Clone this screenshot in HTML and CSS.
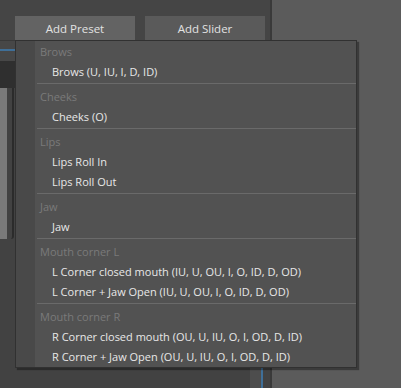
FILE: index.html
```html
<!DOCTYPE html>
<html lang="en">
<head>
    <meta charset="UTF-8">
    <title>Preset Menu</title>
    <link rel="stylesheet" href="styles.css">
</head>
<body>
    <div class="window">
        <div class="left-pane">
            <!-- Toolbar -->
            <div class="toolbar">
                <button class="tool-button preset">Add Preset</button>
                <button class="tool-button">Add Slider</button>
            </div>
            <div class="tab-strip">
                <div class="tab-line"></div>
            </div>
            <div class="dark-band"></div>
            <div class="content">
                <div class="list-box">
                    <div class="list-fill"></div>
                </div>
                <div class="slider-track">
                    <div class="slider-line"></div>
                </div>
            </div>
        </div>
        <div class="right-pane"></div>

        <!-- Add Preset popup -->
        <div class="popup-menu">
            <div class="menu-header">Brows</div>
            <div class="menu-item">Brows (U, IU, I, D, ID)</div>
            <div class="menu-separator"></div>

            <div class="menu-header">Cheeks</div>
            <div class="menu-item">Cheeks (O)</div>
            <div class="menu-separator"></div>

            <div class="menu-header">Lips</div>
            <div class="menu-item">Lips Roll In</div>
            <div class="menu-item">Lips Roll Out</div>
            <div class="menu-separator"></div>

            <div class="menu-header">Jaw</div>
            <div class="menu-item">Jaw</div>
            <div class="menu-separator"></div>

            <div class="menu-header">Mouth corner L</div>
            <div class="menu-item">L Corner closed mouth (IU, U, OU, I, O, ID, D, OD)</div>
            <div class="menu-item">L Corner + Jaw Open (IU, U, OU, I, O, ID, D, OD)</div>
            <div class="menu-separator"></div>

            <div class="menu-header">Mouth corner R</div>
            <div class="menu-item">R Corner closed mouth (OU, U, IU, O, I, OD, D, ID)</div>
            <div class="menu-item">R Corner + Jaw Open (OU, U, IU, O, I, OD, D, ID)</div>
        </div>
    </div>
</body>
</html>
```

FILE: styles.css
```css
body {
    margin: 0;
    padding: 0;
    font-family: 'Open Sans', sans-serif;
    font-size: 11px;
    background-color: #444;
}
.window {
    position: relative;
    display: flex;
    width: 401px;
    height: 388px;
    overflow: hidden;
}
.left-pane {
    width: 270px;
    display: flex;
    flex-direction: column;
    background-color: #424242;
}
.toolbar {
    display: flex;
    gap: 10px;
    height: 40px;
    padding: 16px 0 0 15px;
    box-sizing: border-box;
    background-color: #454545;
}
.tool-button {
    width: 120px;
    height: 24px;
    border: none;
    padding: 0;
    background-color: #5a5a5a;
    color: #e2e2e2;
    font-family: inherit;
    font-size: 11.5px;
}
.tool-button.preset {
    background-color: #636363;
}
.tab-strip {
    height: 21px;
    border-top: 1px solid #393939;
    box-sizing: border-box;
    background-color: #474747;
    padding-top: 8px;
}
.tab-line {
    height: 2px;
    background-color: #3f6f98;
}
.dark-band {
    height: 27px;
    background-color: #2f2f2f;
}
.content {
    flex: 1;
    display: flex;
}
.list-box {
    width: 12px;
    height: 151px;
    border-right: 2px solid #2b2b2b;
    border-bottom-right-radius: 3px;
    box-sizing: content-box;
}
.list-fill {
    width: 7px;
    height: 100%;
    background-color: #7a7a7a;
}
.slider-track {
    margin-left: auto;
    width: 11px;
    background-color: #4d4d4d;
    border-right: 2px solid #3f6f98;
    margin-right: 7px;
}
.right-pane {
    flex: 1;
    background-color: #5b5b5b;
    border-left: 2px solid #3a3a3a;
}
.popup-menu {
    position: absolute;
    left: 15px;
    top: 40px;
    width: 342px;
    box-sizing: border-box;
    padding: 1px 0 0;
    border: 1px solid #313131;
    background: linear-gradient(to right, #494949 19px, #525252 19px);
    box-shadow: 2px 2px 1px rgba(0, 0, 0, 0.35);
}
.menu-header {
    height: 20px;
    line-height: 20px;
    padding-left: 24px;
    color: #7a7a7a;
}
.menu-item {
    height: 20px;
    line-height: 20px;
    padding-left: 36px;
    color: #e8e8e8;
    white-space: nowrap;
}
.menu-separator {
    height: 1px;
    margin: 1px 0 3px 21px;
    background-color: #6a6a6a;
}
```
